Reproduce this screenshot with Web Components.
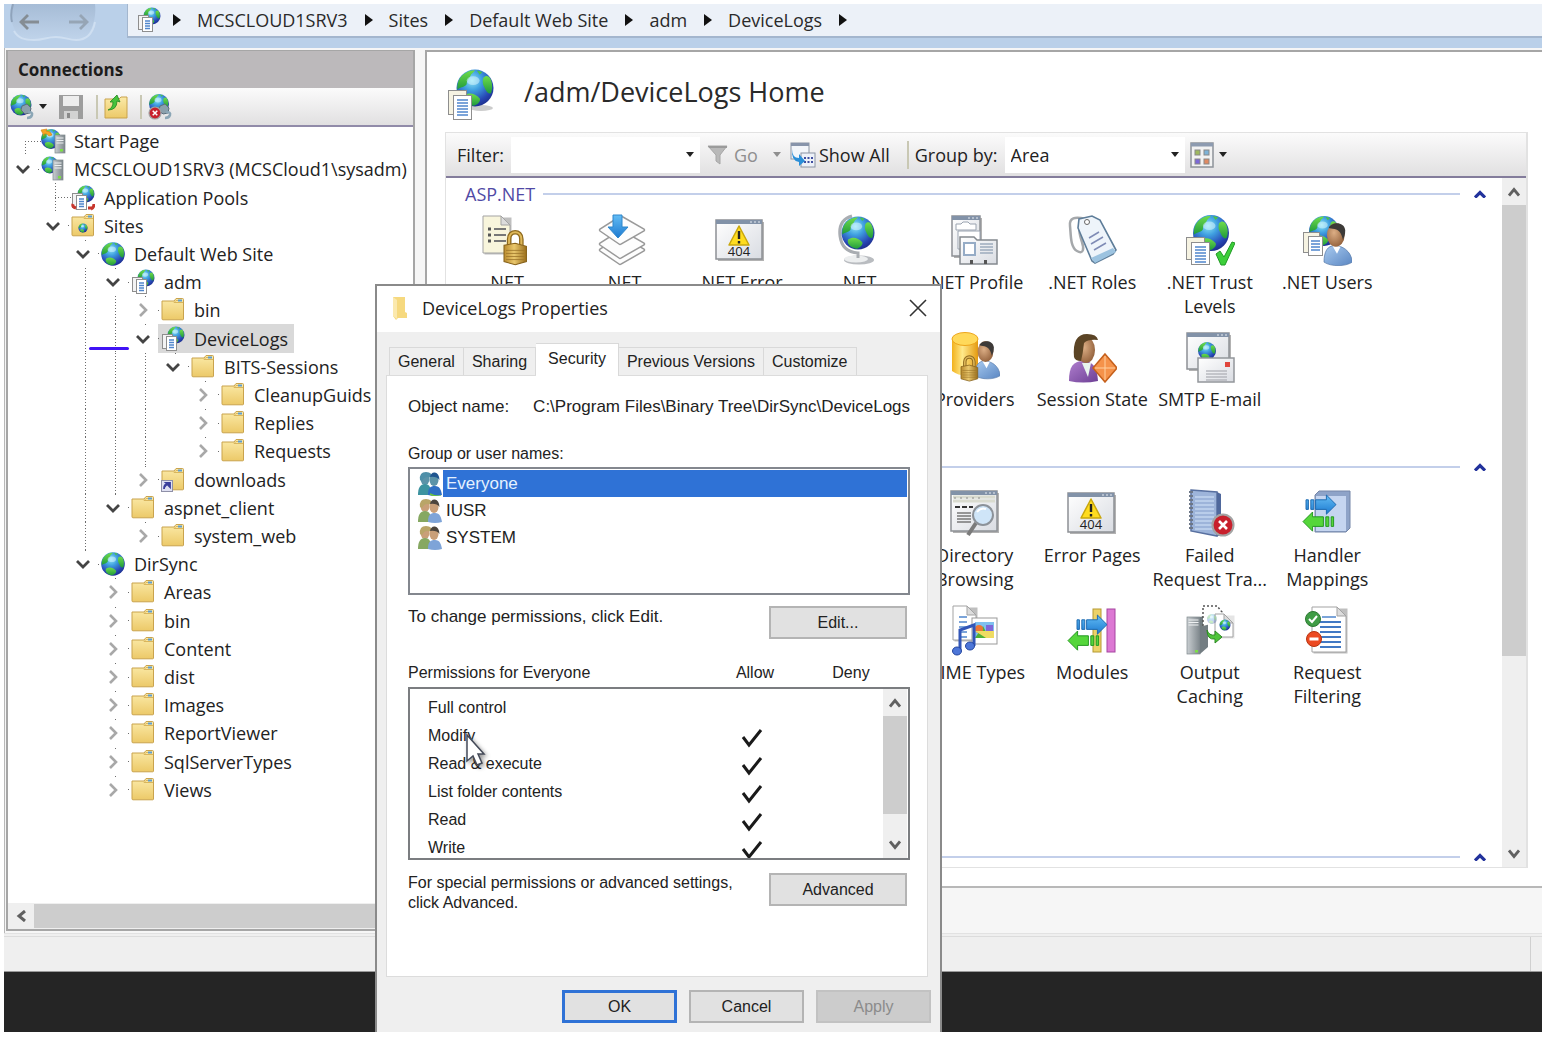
<!DOCTYPE html>
<html lang="en">
<head>
<meta charset="utf-8">
<title>Internet Information Services (IIS) Manager</title>
<style>
  html, body { margin: 0; height: 100%; background: #fff; }
  body {
    position: relative; overflow: hidden; color: #222;
    font: 18px/24px "Open Sans", "Noto Sans", sans-serif;
    --line: #a6a6a6; --face: #efefef; --accent: #2f72d6;
  }
</style>
</head>
<body>
<iis-window>
  <address-bar slot="top">
    <a href="#srv">MCSCLOUD1SRV3</a>
    <a href="#sites">Sites</a>
    <a href="#dws">Default Web Site</a>
    <a href="#adm">adm</a>
    <a href="#logs">DeviceLogs</a>
  </address-bar>

  <connections-pane slot="left">
    <tree-row level="0" icon="start" leaf first>Start Page</tree-row>
    <tree-row level="0" icon="server" open>MCSCLOUD1SRV3 (MCSCloud1\sysadm)</tree-row>
    <tree-row level="1" icon="pools" leaf>Application Pools</tree-row>
    <tree-row level="1" icon="sites" open>Sites</tree-row>
    <tree-row level="2" icon="globe" open>Default Web Site</tree-row>
    <tree-row level="3" icon="app" open guides="2">adm</tree-row>
    <tree-row level="4" icon="folder" guides="2 3">bin</tree-row>
    <tree-row level="4" icon="app" open selected guides="2 3">DeviceLogs</tree-row>
    <tree-row level="5" icon="folder" open guides="2 3 4">BITS-Sessions</tree-row>
    <tree-row level="6" icon="folder" guides="2 3 4">CleanupGuids</tree-row>
    <tree-row level="6" icon="folder" guides="2 3 4">Replies</tree-row>
    <tree-row level="6" icon="folder" guides="2 3 4">Requests</tree-row>
    <tree-row level="4" icon="virtual" guides="2 3">downloads</tree-row>
    <tree-row level="3" icon="folder" open guides="2">aspnet_client</tree-row>
    <tree-row level="4" icon="folder" guides="2">system_web</tree-row>
    <tree-row level="2" icon="globe" open>DirSync</tree-row>
    <tree-row level="3" icon="folder">Areas</tree-row>
    <tree-row level="3" icon="folder">bin</tree-row>
    <tree-row level="3" icon="folder">Content</tree-row>
    <tree-row level="3" icon="folder">dist</tree-row>
    <tree-row level="3" icon="folder">Images</tree-row>
    <tree-row level="3" icon="folder">ReportViewer</tree-row>
    <tree-row level="3" icon="folder">SqlServerTypes</tree-row>
    <tree-row level="3" icon="folder">Views</tree-row>
  </connections-pane>

  <home-pane slot="right">
    <feature-group name="ASP.NET" rows="2">
      <feature-tile icon="auth">.NET</feature-tile>
      <feature-tile icon="layers">.NET</feature-tile>
      <feature-tile icon="error404">.NET Error</feature-tile>
      <feature-tile icon="deskglobe">.NET</feature-tile>
      <feature-tile icon="profile">.NET Profile</feature-tile>
      <feature-tile icon="roles">.NET Roles</feature-tile>
      <feature-tile icon="trust">.NET Trust<br>Levels</feature-tile>
      <feature-tile icon="users">.NET Users</feature-tile>
      <feature-tile icon="providers" col="5">Providers</feature-tile>
      <feature-tile icon="session">Session State</feature-tile>
      <feature-tile icon="smtp">SMTP E-mail</feature-tile>
    </feature-group>
    <feature-group rows="3">
      <feature-tile icon="browse" col="5">Directory<br>Browsing</feature-tile>
      <feature-tile icon="error404">Error Pages</feature-tile>
      <feature-tile icon="failed">Failed<br>Request Tra...</feature-tile>
      <feature-tile icon="handler">Handler<br>Mappings</feature-tile>
      <feature-tile icon="mime" col="5">MIME Types</feature-tile>
      <feature-tile icon="modules">Modules</feature-tile>
      <feature-tile icon="output">Output<br>Caching</feature-tile>
      <feature-tile icon="filtering">Request<br>Filtering</feature-tile>
    </feature-group>
    <feature-group rows="0"></feature-group>
  </home-pane>
</iis-window>

<properties-dialog heading="DeviceLogs Properties"></properties-dialog>
<pen-mark></pen-mark>
<mouse-pointer></mouse-pointer>

<script>
/* ---------- drawing helpers ---------- */
const DEFS = `<defs>
<radialGradient id="gl" cx=".42" cy=".3" r=".75"><stop offset="0" stop-color="#8fe6f5"/><stop offset=".35" stop-color="#3f9fe0"/><stop offset=".75" stop-color="#2746b4"/><stop offset="1" stop-color="#1b2a86"/></radialGradient>
<linearGradient id="gn" x1="0" y1="0" x2="0" y2="1"><stop offset="0" stop-color="#6fdc4a"/><stop offset="1" stop-color="#1f9a3c"/></linearGradient>
<linearGradient id="fo" x1="0" y1="0" x2="0" y2="1"><stop offset="0" stop-color="#fbeaa8"/><stop offset="1" stop-color="#ecc968"/></linearGradient>
<linearGradient id="gy" x1="0" y1="0" x2="1" y2="1"><stop offset="0" stop-color="#ffffff"/><stop offset="1" stop-color="#d9dce2"/></linearGradient>
<linearGradient id="sv" x1="0" y1="0" x2="1" y2="0"><stop offset="0" stop-color="#c9ced1"/><stop offset="1" stop-color="#7d868b"/></linearGradient>
<linearGradient id="bl" x1="0" y1="0" x2="0" y2="1"><stop offset="0" stop-color="#63bdf5"/><stop offset="1" stop-color="#1c79d0"/></linearGradient>
<linearGradient id="go" x1="0" y1="0" x2="1" y2="0"><stop offset="0" stop-color="#b98a2c"/><stop offset=".45" stop-color="#e9c76d"/><stop offset="1" stop-color="#9b6f1c"/></linearGradient>
<linearGradient id="ye" x1="0" y1="0" x2="1" y2="0"><stop offset="0" stop-color="#f2b21d"/><stop offset=".4" stop-color="#ffe98a"/><stop offset="1" stop-color="#e49a10"/></linearGradient>
<radialGradient id="sk" cx=".4" cy=".4" r=".7"><stop offset="0" stop-color="#dcae85"/><stop offset="1" stop-color="#8d5b36"/></radialGradient>
<linearGradient id="sh" x1="0" y1="0" x2="1" y2="1"><stop offset="0" stop-color="#a9cbf0"/><stop offset="1" stop-color="#5a86c2"/></linearGradient>
<linearGradient id="pu" x1="0" y1="0" x2="1" y2="1"><stop offset="0" stop-color="#b07fce"/><stop offset="1" stop-color="#6d3f95"/></linearGradient>
</defs>`;
const globe = (x, y, r) => `<g transform="translate(${x} ${y}) scale(${r / 10})"><circle r="10" fill="url(#gl)"/>
<path d="M-8.800-4C-7-8-3-9.600 0-9.600-1-8-2-8-2.500-6.500-3-5-4.500-4.500-4.500-2-6 0-8.500-.5-9.500 1-9.700-1-9.300-3-8.800-4z" fill="url(#gn)"/>
<path d="M4.500-5.500C6-7 7-6.500 8-5.500 9.500-3 9.600 0 8.800 2.500 7.500 4 6 2 5-.5 4-2 4-4 4.500-5.500z" fill="url(#gn)"/>
<path d="M-6 4C-3 2 0 3 2.500 5.500 3.500 7 1 9.300-1 9.600-4 9-7 7-6 4z" fill="url(#gn)"/>
<path d="M1-9.500l3 .8-1.500 1.500z" fill="#4cc24a"/><ellipse cx="-1" cy="-4" rx="3.500" ry="2.400" fill="#dff8ff" opacity=".5"/></g>`;
const sheet = (x, y, w, h, f = '#fff') => `<rect x="${x}" y="${y}" width="${w}" height="${h}" fill="${f}" stroke="#8e8e8e"/>`;
const lines = (x, y, w, n, gap, c = '#4f86cc', t = 1.5) => Array.from({ length: n }, (_, i) => `<path d="M${x} ${y + i * gap}h${w}" stroke="${c}" stroke-width="${t}"/>`).join('');
const page = (x, y, w, h, f = '#fff') => `<path d="M${x + 1.500} ${y + 1.500}h${w}v${h}h-${w}z" fill="#000" opacity=".25"/><path d="M${x} ${y}h${w - 9}l9 9v${h - 9}h-${w}z" fill="${f}" stroke="#a3a3a3"/><path d="M${x + w - 9} ${y}v9h9z" fill="#dcdcdc" stroke="#a3a3a3"/>`;
const folder = `<path d="M1 4h12l2-2.500h6.500q1 0 1 1V22q0 .8-.8.8H2q-1 0-1-1z" fill="url(#fo)" stroke="#c9a34d"/><path d="M13 5.500h9M13 5.500l2-2h6" fill="none" stroke="#d9b55c"/><rect x="17" y="2.500" width="4" height="2" fill="#5d9cd0"/>`;
const appDocs = globe(15, 9, 8.5) + sheet(1.5, 8.500, 10, 14, '#f3f3f3') + sheet(5.5, 10.500, 10, 14) + lines(8, 14, 5, 4, 2.5);
const tower = (x, y, w, h) => `<rect x="${x}" y="${y}" width="${w}" height="${h}" fill="url(#sv)" stroke="#7e888c" stroke-width=".7"/>` + lines(x + 1.500, y + 3, w - 3, 3, 2.5, '#eef1f2', 1) + `<rect x="${x + w - 5}" y="${y + h - 4}" width="3" height="2.500" fill="#7be044"/>`;
const win = (x, y, w, h) => `<rect x="${x + 2}" y="${y + 2}" width="${w}" height="${h}" fill="#000" opacity=".3"/><rect x="${x}" y="${y}" width="${w}" height="${h}" fill="url(#gy)" stroke="#8d9095" stroke-width="1.500"/><rect x="${x}" y="${y}" width="${w}" height="4" fill="#8292a8"/><path d="M${x + w - 12} ${y + 2}h10" stroke="#e6ebf2" stroke-dasharray="2 2"/>`;
const man = (x, y, s) => `<g transform="translate(${x} ${y}) scale(${s})"><path d="M0 34c0-9 3-14 9-14s14 4 15 14c-6 4-18 4-24 0z" fill="url(#sh)" stroke="#5578a8" stroke-width=".6"/><path d="M7 20l4 7 3-6z" fill="#fff"/><ellipse cx="10" cy="11" rx="7.500" ry="10" fill="url(#sk)"/><path d="M4 5C6 0 17-1 18 7c0 4-1 6-2 8-1-5-3-8-7-9-2-.5-4-.5-5-1z" fill="#3d3a38"/></g>`;
const lock = (x, y, s) => `<g transform="translate(${x} ${y}) scale(${s})"><path d="M5 14V8c0-9 12-9 12 0v6" fill="none" stroke="#8f6a1f" stroke-width="4.500"/><path d="M5 14V8c0-9 12-9 12 0v6" fill="none" stroke="#dfb95a" stroke-width="2"/><path d="M0 14l11-2 11 3v15l-11 3-11-3z" fill="url(#go)" stroke="#86611a"/>${lines(2, 19, 18, 4, 3, '#9c752a', .8)}</g>`;
const right = (x, y) => `<g transform="translate(${x} ${y}) scale(1.2)"><path d="M0 4h2v8h-2zM4 4h2.500v8H4zM8 4h9V0l8 8-8 8v-4H8z" fill="url(#bl)" stroke="#1b68b0" stroke-width=".8"/></g>`;
const left = (x, y) => `<g transform="translate(${x} ${y}) scale(1.2)"><path d="M0 8l8-8v4h9v8H8v4zM19 4h2.500v8H19zM23.500 4h2v8h-2z" fill="#55d63a" stroke="#23951f" stroke-width=".8"/></g>`;
const redX = (x, y, r) => `<circle cx="${x}" cy="${y}" r="${r}" fill="#c8202c" stroke="#a3a3a3" stroke-width="${r / 5}"/><path d="M${x - r * .38} ${y - r * .38}l${r * .76} ${r * .76}m0-${r * .76}l-${r * .76} ${r * .76}" stroke="#fff" stroke-width="${r / 4}"/>`;
const plug = `<path d="M12 12l5-2 4 4-1 5-5 1-4-4z" fill="#8ba0ac" stroke="#5c6f7c"/><path d="M18 18q5 0 4 3t-5 3" fill="none" stroke="#8ba6b6" stroke-width="2.500"/>`;
const pair = (a, b, c, d) => `<ellipse cx="7" cy="7" rx="4.500" ry="6" fill="${a}"/><path d="M2 8Q1 0 8 0t5 6Q7 3 4 9z" fill="${d}"/><path d="M0 23c0-7 2-11 7-11s6 4 6 11z" fill="${b}"/><ellipse cx="16" cy="8" rx="4.500" ry="6" fill="${a}"/><path d="M12 5q1-5 5-4.500t4.500 7.500q-3-4-9.500-3z" fill="#4b443c"/><path d="M10 23c0-7 2-9 7-9s6 4 7 9q-7 2-14 0z" fill="${c}"/>`;

const ICONS = {
  globe: [24, 26, globe(12, 13, 11.8)],
  folder: [24, 26, folder],
  virtual: [24, 26, folder + `<rect x=".5" y="13.500" width="11" height="11" fill="#dfe0f2" stroke="#8f90a8"/><path d="M3 22q0-5 4-5M5 16h4v4z" stroke="#3b3f9c" stroke-width="1.800" fill="#3b3f9c"/>`],
  sites: [24, 26, folder + globe(12, 15, 4.6)],
  app: [24, 26, appDocs],
  pools: [24, 26, appDocs + `<path d="M2 19q-1 3 3 4M20 24q3-1 3-5M17 23h4" stroke="#c7362c" stroke-width="3" fill="none"/>`],
  start: [26, 26, globe(11, 11, 10) + tower(15, 7, 10, 18) + `<path d="M1 2l6-1-1 2q5 0 6 4l-3 1q-2-3-5-2l0 2z" fill="#f5a623" stroke="#d07f10" stroke-width=".6"/>`],
  server: [26, 26, globe(10, 9, 8.5) + tower(13, 4, 10, 20)],
  connect: [24, 26, globe(11, 11, 10.5) + plug],
  disconnect: [26, 26, globe(11, 10, 10) + plug + redX(7, 19, 6)],
  save: [26, 26, `<path d="M1 1h24v24H1z" fill="#9d9d9d"/><path d="M5 2h16v10H5z" fill="#ededed"/><path d="M6 17h14v8H6z" fill="#d2d2d2"/><path d="M9 19h3v5H9z" fill="#8a8a8a"/>`],
  upfolder: [24, 26, `<path d="M1 5h14l2-2h6v21H1z" fill="url(#fo)" stroke="#c9a34d"/><path d="M4 16q5-2 5-8L6 8l7-7 3 7-3-1q0 9-9 9z" fill="#46c23c" stroke="#23851f" stroke-width=".8"/>`],
  apphome: [48, 54, `<ellipse cx="34" cy="40" rx="12" ry="3" fill="#000" opacity=".2"/>` + globe(28, 20, 18.5) + sheet(1.5, 22.500, 18, 24, '#f6f3e2') + sheet(6.5, 27.500, 18, 24) + lines(10, 32, 11, 6, 3)],
  funnel: [22, 22, `<path d="M1 2h19l-7 9v9l-4-3v-6z" fill="#b9b9b9" stroke="#a6a6a6"/><path d="M1 2h19v2H2z" fill="#9b9b9b"/>`],
  showall: [26, 26, `<rect x="1" y="1" width="18" height="16" fill="#f2f5fa" stroke="#8a94a3"/><rect x="1" y="1" width="18" height="3" fill="#8794ab"/><rect x="11" y="11" width="14" height="14" fill="#edf1f8" stroke="#8a94a3"/><path d="M14 16h9M14 20h9" stroke="#3f4ea0" stroke-width="1.800" stroke-dasharray="2 1.500"/><path d="M2 9q0 9 7 9v-4l6 7-6 5v-4Q1 21 2 9z" fill="#2b8fd8" transform="translate(0 -2)"/>`],
  views: [24, 26, `<rect x="1" y="1" width="22" height="24" fill="#f2f2f2" stroke="#8d9299" stroke-width="1.500"/><rect x="1" y="1" width="22" height="3.500" fill="#8d9bb0"/><rect x="5" y="8" width="5" height="5" fill="#9db85e" stroke="#888"/><rect x="14" y="8" width="5" height="5" fill="#7db3d8" stroke="#888"/><rect x="5" y="17" width="5" height="5" fill="#7c68d8" stroke="#888"/><rect x="14" y="17" width="5" height="5" fill="#e08a62" stroke="#888"/>`],
  auth: [50, 52, page(3, 2, 27, 37, '#f8f5dc') + lines(8, 15, 3, 3, 6, '#555', 3) + lines(14, 15, 12, 3, 6, '#777', 2) + lock(24, 17, 1.02)],
  layers: [50, 52, [39, 33, 19].map(y => `<path d="M3 ${y - 2}q-1-1 0-2l19-12q2-1 4 0l21 12q1 1 0 2L24 ${y + 11}q-1 1-2 0z" fill="#fdfdfd" stroke="#9a9a9a" stroke-width="1.500"/>`).join('') + `<path d="M16 1h9v12h6L21 24 11 13h5z" fill="url(#bl)" stroke="#2d86cc"/>`],
  error404: [50, 52, win(1, 6, 46, 39) + `<path d="M24 12l10 19H14z" fill="#ffdc1f" stroke="#c9a70d" stroke-width="1.500" stroke-linejoin="round"/><path d="M24 17v8M24 27v2.500" stroke="#222" stroke-width="2.400"/><text x="24" y="42" text-anchor="middle" font-family="Open Sans" font-size="13" fill="#222">404</text>`],
  deskglobe: [50, 52, `<ellipse cx="27" cy="46" rx="15" ry="4.500" fill="#b9bcc0"/><ellipse cx="24" cy="45" rx="12" ry="3.500" fill="#eceeef"/><path d="M20 2Q6 6 8 22t18 17v5" fill="none" stroke="#a9adb2" stroke-width="3"/>` + globe(26, 19, 16.5)],
  profile: [50, 52, win(2, 2, 28, 40) + `<path d="M6 10h5l2-2h5l2 2h6v6H6zM8 17h22v18H8z" fill="#fff" stroke="#9aa3b0"/><path d="M10 23h14l3 3h20v24H10z" fill="url(#gy)" stroke="#84898f" stroke-width="1.500"/><rect x="14" y="29" width="11" height="12" fill="#fff" stroke="#96acc6" stroke-width="2"/>` + lines(30, 30, 13, 4, 3, '#9cabbd') + `<path d="M20 50v-4h3v4zM34 50v-4h3v4z" fill="#555"/>`],
  roles: [50, 52, `<path d="M18 5C8 2 2 4 3 12s0 21 7 25 7-3 5-9-6-18 3-23z" fill="none" stroke="#a5a8ab" stroke-width="2.500"/><path d="M12 5l13-3 8 4 16 30-3 4-18 9-3-2L11 14z" fill="#eef4fa" stroke="#5e7d99" stroke-width="1.600"/><path d="M46 34l3 4-21 11-4-5z" fill="#9cc3e0"/><circle cx="20" cy="8" r="2.500" fill="#fff" stroke="#666"/><path d="M22 24l10-6M24 30l12-7M27 36l12-7" stroke="#7f8bb5" stroke-width="1.500"/>`],
  trust: [50, 52, globe(26, 19, 18) + sheet(1.500, 23.500, 18, 22, '#f6f3e2') + sheet(6.500, 28.500, 18, 22) + lines(10, 33, 11, 6, 3) + `<path d="M31 40l4-3 4 6L47 28l3 1-10 22h-4z" fill="#3dcf3a" stroke="#219a25"/>`],
  users: [50, 52, globe(22, 17, 15) + sheet(1.500, 18.500, 16, 20, '#f6f3e2') + sheet(6.500, 22.500, 14, 19) + lines(9, 27, 9, 4, 3) + man(22, 8, 1.18)],
  providers: [50, 52, `<path d="M2 8v32q11 8 26 2V8z" fill="url(#ye)"/><ellipse cx="15" cy="8" rx="13" ry="6.500" fill="#ffd95a" stroke="#eda51a"/>` + man(25, 9, 1.05) + lock(11, 25, .76)],
  session: [50, 52, `<path d="M2 50c0-14 4-20 14-20s14 6 15 20q-15 3-29 0z" fill="url(#pu)"/><path d="M15 32l6 14 3-14z" fill="#e9f5ee"/><ellipse cx="19" cy="19" rx="9" ry="13" fill="url(#sk)"/><path d="M7 26Q5 3 20 3q10 0 11 6-10-1-14 3-1 10-3 18-6 0-7-4z" fill="#5b4425"/><path d="M38 23l12 14-12 14-12-14z" fill="#f5924a" stroke="#c5601c" stroke-width="1.500"/><path d="M38 25v24M28 37h20" stroke="#ffd0a0"/>`],
  smtp: [50, 52, win(2, 2, 42, 36) + globe(22, 20, 9) + `<rect x="13" y="27" width="36" height="24" fill="url(#gy)" stroke="#93969b" stroke-width="1.500"/><rect x="40" y="31" width="5" height="5" fill="#e0453c"/>` + lines(21, 40, 21, 4, 3, '#a9acb2', 1.2)],
  browse: [50, 52, win(1, 4, 46, 40) + lines(3, 10, 42, 2, 4, '#d9dbcf', 3) + `<path d="M4 11h30" stroke="#8a8a8a" stroke-dasharray="2 4"/><path d="M5 20h18" stroke="#333" stroke-width="2" stroke-dasharray="5 2"/>` + lines(7, 26, 14, 4, 3, '#777', 1.5) + `<path d="M26 36l-8 12" stroke="#7b7b7b" stroke-width="4"/><circle cx="33" cy="28" r="10" fill="#cfe5f8" stroke="#8c9299" stroke-width="2"/><path d="M27 25q4-5 9-3" stroke="#fff" stroke-width="2" fill="none"/>`],
  failed: [50, 52, `<path d="M6 3l26 2v44L6 44z" fill="#9db4da" stroke="#5870a0" stroke-width="1.500"/><path d="M32 5l4 2v42h-4z" fill="#4f689c"/>` + lines(10, 10, 19, 9, 4, '#b9cdea', 2) + `<path d="M6 4v40" stroke="#6d7787" stroke-width="4" stroke-dasharray="2 2"/>` + redX(38, 38, 10.5)],
  handler: [50, 52, `<path d="M13 8l4-4h31v37l-4 4H13z" fill="#8ea3c8" stroke="#7486a8"/><path d="M14 9h30v35H14z" fill="#c5d5f0"/>` + right(4, 8) + left(1, 25)],
  mime: [50, 52, page(3, 2, 23, 34) + lines(9, 13, 8, 5, 5) + `<rect x="22" y="14" width="25" height="26" fill="#fff" stroke="#999"/><rect x="25" y="18" width="19" height="16" fill="#7fc0ef"/><path d="M25 34l8-12 6 12z" fill="#4faf36"/><circle cx="29" cy="25" r="4" fill="#ee7636"/><path d="M36 21h7v7h-7z" fill="#7f67d8"/><path d="M25 27h19v7H36z" fill="#efdb62"/><path d="M10 46V26l14-5v21" fill="none" stroke="#3256b8" stroke-width="3"/><ellipse cx="7" cy="47" rx="4.500" ry="4" fill="#4d76d8" stroke="#23459e"/><ellipse cx="20" cy="42" rx="4.500" ry="4" fill="#4d76d8" stroke="#23459e"/>`],
  modules: [50, 52, `<rect x="26" y="5" width="8" height="43" fill="#ecd268" stroke="#b69a32"/><rect x="40" y="5" width="8" height="43" fill="#dc78d3" stroke="#a644a0"/>` + right(10, 11) + left(1, 27)],
  output: [50, 52, tower(2, 13, 13, 37) + `<path d="M15 13l8-2v32l-8 7z" fill="#737d82"/><path d="M18 22V2h14l5 6v9" fill="#fff" stroke="#555" stroke-dasharray="2 2" stroke-width="1.500"/>` + page(30, 10, 18, 23).replace('opacity=".25"', 'opacity=".1"') + `<g opacity=".3">${globe(27, 15, 5)}</g>` + globe(40, 21, 5.500) + `<path d="M22 26q2 6 8 5v-4l7 6-7 6v-4q-8 1-8-9z" fill="#4fc43a" stroke="#2c8a22"/>`],
  filtering: [50, 52, page(10, 3, 34, 45) + lines(20, 13, 14, 1, 1) + lines(18, 18, 21, 6, 5, '#4279c4', 2) + `<circle cx="11" cy="15" r="7.500" fill="#3f9c45" stroke="#2c7832"/><path d="M7 15l3 3 5-6" stroke="#fff" stroke-width="2" fill="none"/><circle cx="12" cy="35" r="7.500" fill="#ec4a22" stroke="#b8330f"/><path d="M7.500 35h9" stroke="#fff" stroke-width="3"/>`],
  dlgfolder: [16, 24, `<path d="M1 1h12v15l2 1v5H6l-2 2-3-4z" fill="#f6d97f"/><path d="M1 1l4 3v19l-4-3z" fill="#fbe9ae"/>`],
  crowdsel: [24, 24, pair('#5b93a8', '#3d93a0', '#2f6fc4', '#4e8fa8').replace(/#4b443c/, '#1f5590') + `<path d="M12 22q6 3 11 2" stroke="#6dc53c" stroke-width="1.500" fill="none"/>`],
  crowd: [24, 24, pair('#c99f78', '#86a862', '#7ea4d8', '#b9a568')],
  close: [18, 18, `<path d="M1 1l16 16M17 1L1 17" stroke="#333" stroke-width="1.600"/>`],
  tick: [22, 20, `<path d="M2 9l6 8L20 2" fill="none" stroke="#1a1a1a" stroke-width="3"/>`],
  down: [14, 10, `<path d="M1 2l6 6 6-6" fill="none" stroke="#444" stroke-width="2.800"/>`],
  next: [10, 16, `<path d="M2 2l6 6-6 6" fill="none" stroke="#a8a8a8" stroke-width="2.600"/>`],
  sup: [12, 10, `<path d="M1 8.500l5-6 5 6" fill="none" stroke="#606060" stroke-width="2.800"/>`],
  sdown: [12, 10, `<path d="M1 1.500l5 6 5-6" fill="none" stroke="#606060" stroke-width="2.800"/>`],
  sleft: [10, 12, `<path d="M9 1L3 6l6 5" fill="none" stroke="#606060" stroke-width="3"/>`],
  collapse: [12, 8, `<path d="M1 7.500l5-5 5 5" fill="none" stroke="#22329c" stroke-width="3.200"/>`],
  caret: [8, 5, `<path d="M0 0h8L4 5z" fill="currentColor"/>`],
  step: [8, 12, `<path d="M0 0l8 6-8 6z" fill="#111"/>`],
  back: [20, 16, `<path d="M9 1L2 8l7 7M2 8h18" fill="none" stroke="#858d94" stroke-width="2.800"/>`],
  forward: [20, 16, `<path d="M11 1l7 7-7 7M18 8H0" fill="none" stroke="#96a5b5" stroke-width="2.800"/>`]
};

const define = (name, render, ready) => customElements.define(name, class extends HTMLElement {
  connectedCallback() {
    if (this.shadowRoot) return;
    const root = this.attachShadow({ mode: 'open' });
    const t = document.createElement('template');
    t.innerHTML = '<style>*{box-sizing:border-box}button,input,select{font:inherit;color:inherit;margin:0;padding:0;border:0;background:none}:host([hidden]){display:none}</style>' + render(this);
    root.append(t.content.cloneNode(true));
    if (ready) ready(this, root);
  }
});

define('ui-icon', el => {
  const [w, h, body] = ICONS[el.getAttribute('name')];
  return `<style>:host{display:inline-flex;flex:none}svg{display:block}</style>
  <svg width="${w}" height="${h}" viewBox="0 0 ${w} ${h}" aria-hidden="true">${/url\(#/.test(body) ? DEFS : ''}${body}</svg>`;
});

/* ---------- window shell ---------- */
define('iis-window', () => `<style>
  :host{display:flex;flex-direction:column;height:100%;box-sizing:border-box;padding:4px 0 5px 4px}
  .main{flex:1;min-height:0;display:flex;gap:10px;padding:2px 0 0 1px;background:#f6f6f6;border-left:1px solid #b9b9b9}
  .left{width:409px;flex:none;display:flex;padding-bottom:2px}
  .right{flex:1;min-width:0;display:flex;padding-bottom:45px}
  .status{height:39px;flex:none;background:var(--face);border-top:1px solid #e2e2e2;border-bottom:1px solid #999;padding-top:2px}
  .status div{height:100%;border-top:1px solid #dcdcdc;display:flex;justify-content:flex-end}
  .status i{width:12px;border-left:1px solid #d0d0d0}
  .desk{height:60px;flex:none;background:#252525}
  slot{display:contents}
</style>
<slot name="top"></slot>
<div class="main"><div class="left"><slot name="left"></slot></div><div class="right"><slot name="right"></slot></div></div>
<div class="status"><div><i></i></div></div><div class="desk"></div>`);

define('address-bar', () => `<style>
  :host{display:flex;height:44px;flex:none;background:#bad0e9;align-items:flex-start}
  .nav{display:grid;width:100px;margin-right:23px}
  .nav>*{grid-area:1/1}
  .btns{display:flex;gap:30px;padding:10px 0 0 15px;height:36px}
  button{display:flex;align-items:flex-start}
  .path{flex:1;height:34px;display:flex;align-items:center;background:#ecf1f8;border:1px solid #a3b6ce;border-width:0 0 2px 1px;padding-left:9px}
  .path>ui-icon{margin-right:12px}
  nav{display:flex;align-items:center}
  nav ui-icon{margin-right:16px}
  ::slotted(a){color:#2a2a2a;text-decoration:none;white-space:nowrap;margin-right:17px}
</style>
<div class="nav"><svg width="100" height="40" aria-hidden="true"><defs><linearGradient id="pill" x1="0" y1="0" x2="0" y2="1"><stop offset="0" stop-color="#a6bcd6"/><stop offset="1" stop-color="#bfd3ea"/></linearGradient></defs><path d="M8 0C4 20 12 36 30 35c10 0 12-4 22-4s12 4 20 4c14 0 21-18 19-35z" fill="url(#pill)"/><path d="M10 27C14 34 20 36 30 36c10 0 12-3 22-3s12 3 20 3c12 0 17-8 19-18" fill="none" stroke="#cfdff1" stroke-width="2"/><path d="M9 0Q6 10 8 18" fill="none" stroke="#8fa3bb" stroke-width="2"/></svg>
<div class="btns"><button aria-label="Back"><ui-icon name="back"></ui-icon></button><button aria-label="Forward"><ui-icon name="forward"></ui-icon></button></div></div>
<div class="path"><ui-icon name="app"></ui-icon><nav><slot></slot></nav></div>`,
(el, root) => {
  const nav = root.querySelector('nav');
  nav.textContent = '';
  [...el.querySelectorAll('a')].forEach((a, i) => {
    a.slot = 'c' + i;
    nav.insertAdjacentHTML('beforeend', `<ui-icon name="step"></ui-icon><slot name="c${i}"></slot>`);
  });
  nav.insertAdjacentHTML('beforeend', '<ui-icon name="step"></ui-icon>');
});

/* ---------- connections ---------- */
define('connections-pane', () => `<style>
  :host{flex:1;min-width:0;display:flex;flex-direction:column;background:#fff;border:2px solid var(--line);border-top-width:1px}
  h2{margin:0;height:37px;padding-left:10px;background:#bcb9bb;font:bold 17px/38px "Open Sans",sans-serif;color:#1c1c1c}
  .bar{height:39px;display:flex;align-items:center;padding-left:2px;background:linear-gradient(#fbfbfb,#e1e0e1);border-bottom:2px solid #918ba9}
  .bar button{display:flex;align-items:center;gap:5px}
  .bar i{width:2px;height:24px;background:#c9c8b4;margin:0 6px 0 12px}
  .bar .save{margin-left:11px}
  .tree{height:677px;display:grid;grid-auto-rows:1fr}
  .hscroll{margin-top:auto;height:26px;display:flex;align-items:center;background:var(--face);padding:1px 0}
  .hscroll button{width:26px;display:flex;justify-content:center}
  .hscroll span{flex:1;height:24px;background:#cdcdcd}
</style>
<h2>Connections</h2>
<div class="bar">
  <button aria-label="Connect"><ui-icon name="connect"></ui-icon><ui-icon name="caret"></ui-icon></button>
  <button class="save" aria-label="Save"><ui-icon name="save"></ui-icon></button><i></i>
  <button aria-label="Up"><ui-icon name="upfolder"></ui-icon></button><i></i>
  <button aria-label="Disconnect"><ui-icon name="disconnect"></ui-icon></button>
</div>
<div class="tree" role="tree"><slot></slot></div>
<div class="hscroll"><button aria-label="Scroll left"><ui-icon name="sleft"></ui-icon></button><span></span></div>`);

define('tree-row', el => {
  const level = +el.getAttribute('level'), leaf = el.hasAttribute('leaf'), open = el.hasAttribute('open');
  const dot = (l, size, y = '0') => `repeating-linear-gradient(#6c6c6c 0 1px,transparent 1px 3px) ${17 + l * 30}px ${y}/1px ${size} no-repeat`;
  const bg = (el.getAttribute('guides') || '').split(' ').filter(Boolean).map(l => dot(l, '100%'));
  if (el.hasAttribute('first')) bg.push(dot(0, '50%', '100%'));
  else if (leaf) bg.push(dot(level, '100%'));
  else if (level > 1) bg.push(dot(level, '1px'));
  return `<style>
  :host{display:flex;align-items:center;min-width:0;padding-left:${8 + level * 30}px;${bg.length ? `background:${bg.join(',')}` : ''}}
  .tog{width:14px;display:flex;justify-content:center}
  .dots{height:1px;flex:none;background:repeating-linear-gradient(90deg,#6c6c6c 0 1px,transparent 1px 3px)}
  .item{display:flex;align-items:center;height:100%;padding-right:6px;white-space:nowrap;${el.hasAttribute('selected') ? 'background:#d9d9d9' : ''}}
  .ic{width:24px;display:flex;justify-content:center;margin-right:9px}
  .gap{width:${leaf ? 0 : 8}px}
  </style>
  ${leaf ? '' : `<button class="tog" aria-label="Toggle"><ui-icon name="${open ? 'down' : 'next'}"></ui-icon></button>`}
  <span class="gap"></span><span class="item" role="treeitem">
  <span class="dots" style="width:${leaf ? 16 : 3}px;margin-left:${leaf ? 9 : 0}px"></span><span class="ic"><ui-icon name="${el.getAttribute('icon')}"></ui-icon></span><slot></slot></span>`;
});

/* ---------- feature view ---------- */
define('scroll-bar', el => `<style>
  :host{display:flex;flex-direction:column;width:24px;flex:none;background:var(--face)}
  button{height:27px;flex:none;display:flex;align-items:center;justify-content:center}
  div{flex:1}
  span{display:block;height:${el.getAttribute('thumb')};background:#cdcdcd}
</style><button aria-label="Scroll up"><ui-icon name="sup"></ui-icon></button><div><span></span></div><button aria-label="Scroll down"><ui-icon name="sdown"></ui-icon></button>`);

define('home-pane', () => `<style>
  :host{flex:1;min-width:0;display:flex;flex-direction:column;background:#fff;border:2px solid var(--line);border-right:0;border-bottom-color:#b8b8b8}
  header{height:80px;flex:none;display:flex;align-items:center;gap:29px;padding-left:20px}
  h1{margin:0;font:27px/40px "Open Sans",sans-serif;color:#2a2a2a}
  header ui-icon{padding-top:6px}
  .box{flex:1;min-height:0;display:flex;flex-direction:column;margin:0 14px 18px 18px;border:1px solid #e2e2e2;border-right-width:2px}
  .bar{height:45px;flex:none;display:flex;align-items:center;padding-left:11px;background:linear-gradient(#fbfbfb,#e1e0e1);border-bottom:2px solid #837c9b}
  .combo{display:flex;align-items:center;justify-content:space-between;height:36px;background:#fff;padding:0 6px}
  .f{width:189px;margin:0 7px}
  .f input{width:160px;outline:0}
  .g{width:180px;margin:0 5px 0 7px}
  .g select{flex:1;appearance:none;outline:0}
  .bar button{display:flex;align-items:center;gap:5px}
  .go{color:#8f8f8f}
  .go ui-icon:last-child{margin-left:10px}
  .bar .show{margin-left:9px;gap:3px}
  i{width:2px;height:28px;background:#c9c8b4;margin:0 6px 0 17px}
  .scroll{flex:1;min-height:0;display:flex}
  .groups{flex:1;min-width:0;overflow:hidden;padding-top:2px}
</style>
<header><ui-icon name="apphome"></ui-icon><h1>/adm/DeviceLogs Home</h1></header>
<div class="box">
  <div class="bar">
    <label for="filter">Filter:</label>
    <span class="combo f"><input id="filter" type="text"><ui-icon name="caret"></ui-icon></span>
    <button class="go" disabled><ui-icon name="funnel"></ui-icon>Go<ui-icon name="caret"></ui-icon></button>
    <button class="show"><ui-icon name="showall"></ui-icon>Show All</button><i></i>
    <label for="groupby">Group by:</label>
    <span class="combo g"><select id="groupby"><option>Area</option></select><ui-icon name="caret"></ui-icon></span>
    <button aria-label="View"><ui-icon name="views"></ui-icon><ui-icon name="caret"></ui-icon></button>
  </div>
  <div class="scroll"><div class="groups"><slot></slot></div><scroll-bar thumb="71%"></scroll-bar></div>
</div>`);

define('feature-group', el => `<style>
  :host{display:block;margin-bottom:5px}
  header{height:28px;display:flex;align-items:center;gap:8px;padding:0 16px 0 19px;color:#5049a5}
  hr{flex:1;margin:0 6px 0 0;border:0;border-top:2px solid #c3cfea}
  button{display:flex}
  .grid{display:grid;grid-template-columns:repeat(8,1fr);grid-template-rows:repeat(${el.getAttribute('rows') || 0},117px);width:940px;margin-top:6px}
</style>
<header><span>${el.getAttribute('name') || ''}</span><hr><button aria-label="Collapse"><ui-icon name="collapse"></ui-icon></button></header>
${+el.getAttribute('rows') ? '<div class="grid"><slot></slot></div>' : ''}`);

define('feature-tile', el => `<style>
  :host{display:flex;flex-direction:column;align-items:center;gap:4px;text-align:center;white-space:nowrap;${el.hasAttribute('col') ? `grid-column-start:${el.getAttribute('col')}` : ''}}
</style><ui-icon name="${el.getAttribute('icon')}"></ui-icon><span><slot></slot></span>`);

/* ---------- properties dialog ---------- */
const perms = [['Full control', 0], ['Modify', 1], ['Read & execute', 1], ['List folder contents', 1], ['Read', 1], ['Write', 1]];
define('properties-dialog', el => `<style>
  :host{position:absolute;left:375px;top:284px;bottom:5px;width:567px;display:flex;flex-direction:column;box-sizing:border-box;
    background:var(--face);border:2px solid #8a8a8a;border-bottom:0;font:16px/24px "Liberation Sans",Arial,sans-serif}
  .title{height:46px;flex:none;background:#fff;display:flex;align-items:center;padding:0 13px 2px 15px}
  h2{flex:1;margin:0 0 0 14px;font:18px/24px "Open Sans",sans-serif}
  .title button{display:flex}
  .tabs{display:flex;align-items:flex-end;padding:11px 12px 0;flex:none}
  .tabs button{height:28px;padding:0 8px;border:1px solid #d9d9d9;border-left-width:0;border-bottom:0}
  .tabs button:first-child{border-left-width:1px}
  .tabs .on{height:33px;padding:0 12px 2px;background:#fff;margin-bottom:-1px;position:relative}
  .panel{flex:1;background:#fff;border:1px solid #dcdcdc;margin:0 12px 0 9px;padding:19px 17px 0 21px}
  .panel p{margin:0}
  .l{font-size:17px}
  .obj{display:flex;gap:24px;margin-bottom:23px;white-space:nowrap}
  ul{list-style:none;margin:1px 0 10px;padding:1px 1px 0 8px;height:128px;border:2px solid #83878e}
  li{height:27px;display:flex;align-items:center;gap:1px}
  li span{flex:1;height:100%;line-height:28px;padding-left:3px}
  li.sel span{background:var(--accent);color:#e4f1ff}
  .row{display:flex;justify-content:space-between;align-items:flex-start;padding-right:3px;height:34px}
  .b{height:33px;width:138px;background:#e1e1e1;border:2px solid #b4b4b4}
  .row .b{margin-top:1px}
  .head{display:grid;grid-template-columns:1fr 96px 96px;padding-right:11px;margin:22px 0 2px}
  .head span:not(:first-child){text-align:center}
  .box{height:173px;display:flex;border:2px solid #7b7d80;overflow:hidden;padding-right:1px;margin-bottom:12px}
  .tw{flex:1;overflow:hidden;padding-top:5px}
  table{border-collapse:collapse;width:100%;table-layout:fixed}
  td{padding:0 0 0 18px;height:28px}
  td+td{padding:3px 0 0 2px;width:96px;text-align:center;line-height:0}
  td+td+td{width:84px}
  .adv{line-height:20px;height:auto}
  .adv p{padding-top:1px}
  .foot{display:flex;justify-content:flex-end;gap:12px;padding:13px 9px 9px;flex:none}
  .foot .b{width:115px}
  .foot .ok{border:3px solid var(--accent)}
  .foot .b:disabled{background:#cccccc;border-color:#c2c2c2;color:#8b8b8b}
</style>
<div class="title"><ui-icon name="dlgfolder"></ui-icon><h2>${el.getAttribute('heading')}</h2><button aria-label="Close"><ui-icon name="close"></ui-icon></button></div>
<div class="tabs" role="tablist"><button role="tab">General</button><button role="tab">Sharing</button><button role="tab" class="on" aria-selected="true">Security</button><button role="tab">Previous Versions</button><button role="tab">Customize</button></div>
<div class="panel">
  <div class="obj l"><span>Object name:</span><span>C:\\Program Files\\Binary Tree\\DirSync\\DeviceLogs</span></div>
  <p>Group or user names:</p>
  <ul class="l" role="listbox">
    <li class="sel" role="option"><ui-icon name="crowdsel"></ui-icon><span>Everyone</span></li>
    <li role="option"><ui-icon name="crowd"></ui-icon><span>IUSR</span></li>
    <li role="option"><ui-icon name="crowd"></ui-icon><span>SYSTEM</span></li>
  </ul>
  <div class="row"><p class="l">To change permissions, click Edit.</p><button class="b">Edit...</button></div>
  <div class="head"><span>Permissions for Everyone</span><span>Allow</span><span>Deny</span></div>
  <div class="box"><div class="tw"><table>${perms.map(([n, a]) => `<tr><td>${n.replace('&', '&amp;')}</td><td>${a ? '<ui-icon name="tick"></ui-icon>' : ''}</td><td></td></tr>`).join('')}</table></div><scroll-bar thumb="85%"></scroll-bar></div>
  <div class="row adv"><p>For special permissions or advanced settings,<br>click Advanced.</p><button class="b">Advanced</button></div>
</div>
<div class="foot"><button class="b ok">OK</button><button class="b">Cancel</button><button class="b" disabled>Apply</button></div>`);

/* ---------- overlays ---------- */
define('pen-mark', () => `<style>:host{position:absolute;left:89px;top:347px;width:40px;height:3px;border-radius:2px;background:#4013f5}</style>`);
define('mouse-pointer', () => `<style>:host{position:absolute;left:465px;top:733px}svg{display:block;filter:drop-shadow(2px 2px 2px #0006)}</style>
<svg width="24" height="36" aria-hidden="true"><path d="M2 2v26l6-5 4 9 5-2-4-9h6z" fill="#fff" stroke="#444a58" stroke-width="1.500"/></svg>`);
</script>
</body>
</html>
